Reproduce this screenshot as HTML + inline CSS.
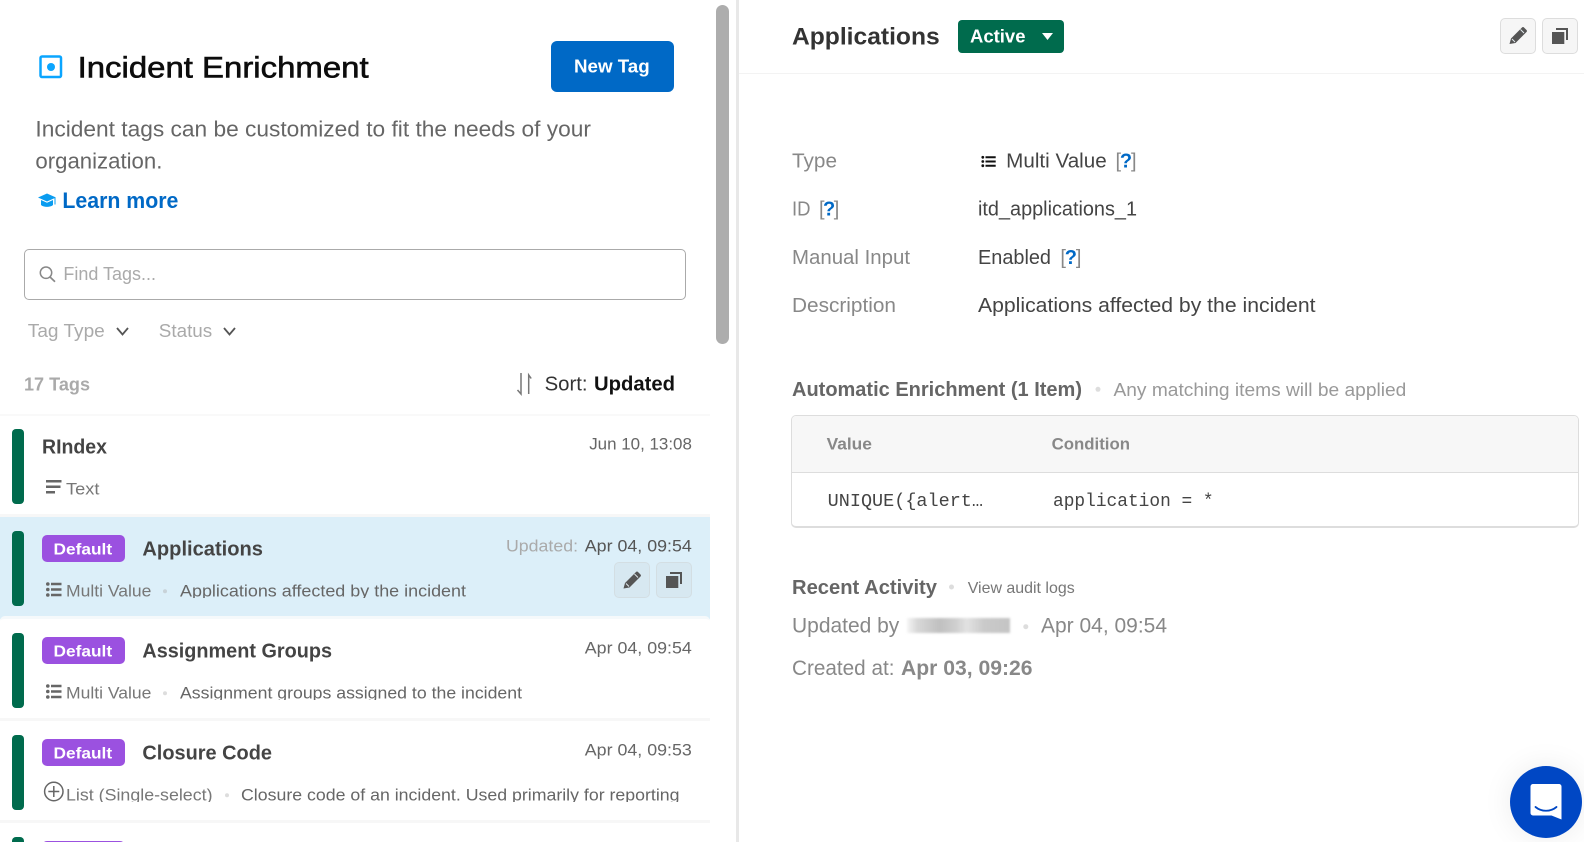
<!DOCTYPE html>
<html lang="en"><head><meta charset="utf-8"><title>Incident Enrichment</title>
<style>
html,body{margin:0;padding:0;width:1584px;height:842px;overflow:hidden;background:#fff}
#p{position:relative;width:1584px;height:842px;overflow:hidden;background:#fff}
.b{position:absolute;box-sizing:border-box}
svg{position:absolute;left:0;top:0}
text{font-family:"Liberation Sans",sans-serif;white-space:pre}
.m{font-family:"Liberation Mono",monospace}
.w{font-weight:700}
</style></head><body><div id="p">
<div class="b" style="left:716px;top:5px;width:13px;height:339px;background:#adadad;border-radius:7px"></div>
<div class="b" style="left:735.500px;top:0;width:3.500px;height:842px;background:#e8e8e8"></div>
<div class="b" style="left:551px;top:41px;width:122.500px;height:51px;background:#0069c6;border-radius:6px"></div>
<div class="b" style="left:24px;top:249px;width:662px;height:51px;border:1px solid #aaa;border-radius:5px"></div>
<div class="b" style="left:0;top:414px;width:710px;height:2px;background:#f9f9f9"></div>
<div class="b" style="left:0;top:514px;width:710px;height:3px;background:#f7f7f7"></div>
<div class="b" style="left:0;top:517px;width:710px;height:102px;background:#dceff9"></div>
<div class="b" style="left:0;top:616px;width:710px;height:5px;background:#fff;border-radius:5px 5px 0 0;border-top:3px solid #f5f9fb"></div>
<div class="b" style="left:0;top:718px;width:710px;height:3px;background:#f7f7f7"></div>
<div class="b" style="left:0;top:820px;width:710px;height:3px;background:#f7f7f7"></div>
<div class="b" style="left:12px;top:429px;width:12px;height:75px;background:#006b4d;border-radius:4px"></div>
<div class="b" style="left:12px;top:531px;width:12px;height:75px;background:#006b4d;border-radius:4px"></div>
<div class="b" style="left:12px;top:633px;width:12px;height:75px;background:#006b4d;border-radius:4px"></div>
<div class="b" style="left:12px;top:735px;width:12px;height:75px;background:#006b4d;border-radius:4px"></div>
<div class="b" style="left:12px;top:837px;width:12px;height:20px;background:#006b4d;border-radius:4px"></div>
<div class="b" style="left:42px;top:535px;width:82.500px;height:27px;background:#9b51e0;border-radius:5px"></div>
<div class="b" style="left:42px;top:637px;width:82.500px;height:27px;background:#9b51e0;border-radius:5px"></div>
<div class="b" style="left:42px;top:739px;width:82.500px;height:27px;background:#9b51e0;border-radius:5px"></div>
<div class="b" style="left:42px;top:841px;width:82.500px;height:27px;background:#9b51e0;border-radius:5px"></div>
<div class="b" style="left:614px;top:562px;width:36px;height:36px;background:#d7e8f1;border:1px solid #d3dee3;border-radius:5px"></div>
<div class="b" style="left:656px;top:562px;width:36px;height:36px;background:#d7e8f1;border:1px solid #d3dee3;border-radius:5px"></div>
<div class="b" style="left:958px;top:20px;width:106px;height:33px;background:#006b4d;border-radius:4px"></div>
<div class="b" style="left:1500px;top:18px;width:36px;height:36px;background:#f6f6f6;border:1px solid #ddd;border-radius:5px"></div>
<div class="b" style="left:1542px;top:18px;width:36px;height:36px;background:#f6f6f6;border:1px solid #ddd;border-radius:5px"></div>
<div class="b" style="left:739px;top:73px;width:845px;height:1px;background:#f3f3f3"></div>
<div class="b" style="left:791px;top:415px;width:788px;height:113px;border:1px solid #ddd;border-bottom:2px solid #ddd;border-radius:5px;overflow:hidden"><div style="height:56px;background:#f7f7f7;border-bottom:1px solid #ddd"></div></div>
<div class="b" style="left:907px;top:618px;width:103px;height:15px;background:linear-gradient(90deg,#f5f5f5 0,#d8d8d8 10%,#c0c0c0 32%,#d0d0d0 48%,#e2e2e2 58%,#cacaca 75%,#c4c4c4 100%);filter:blur(1px)"></div>
<div class="b" style="left:1510px;top:766px;width:72px;height:72px;background:#0047c4;border-radius:50%;box-shadow:0 0 30px rgba(0,0,0,.08)"></div>

<svg width="1584" height="842" viewBox="0 0 1584 842" xmlns="http://www.w3.org/2000/svg">
<defs>
<clipPath id="c2"><rect x="0" y="570" width="600" height="28"/></clipPath>
<clipPath id="c3"><rect x="0" y="672" width="600" height="28"/></clipPath>
<clipPath id="c4"><rect x="0" y="774" width="700" height="28"/></clipPath>
<g id="pencil"><path d="M0 17l1.500-5.500L12.500 .5a1.500 1.500 0 0 1 2 0l2.500 2.500a1.500 1.500 0 0 1 0 2L6 16z" fill="#555"/><path d="M2.500 12l3 3M11 2.500l3.500 3.500" stroke="#e6eef2" stroke-width=".9" fill="none"/></g>
<g id="copy"><path d="M4 0h12v12h-2V2H4z" fill="#555"/><rect x="0" y="4" width="12.300" height="12" fill="#555"/></g>
<g id="ml"><circle cx="47.800" cy="0" r="1.800"/><circle cx="47.800" cy="5.500" r="1.800"/><circle cx="47.800" cy="11" r="1.800"/><path d="M51 -1.200h10.500v2.400H51zM51 4.300h10.500v2.400H51zM51 9.800h10.500v2.400H51z"/></g>
</defs>

<!-- header left -->
<rect x="40.500" y="56.500" width="20.500" height="20.500" rx="1.500" fill="none" stroke="#0aa5ff" stroke-width="2.500"/>
<circle cx="51" cy="67" r="4" fill="#0aa5ff"/>
<text x="77.600" y="77.500" font-size="30" fill="#0c0c0c" stroke="#0c0c0c" stroke-width=".6" textLength="291" lengthAdjust="spacingAndGlyphs">Incident Enrichment</text>
<text x="574" y="72.500" font-size="18" class="w" fill="#fff" textLength="75.700" lengthAdjust="spacingAndGlyphs">New Tag</text>
<text x="35.400" y="136.500" font-size="22" fill="#666" textLength="555.600" lengthAdjust="spacingAndGlyphs">Incident tags can be customized to fit the needs of your</text>
<text x="35.400" y="168.300" font-size="22" fill="#666" textLength="127" lengthAdjust="spacingAndGlyphs">organization.</text>
<path d="M38 197.500l9-4 9 4-9 4z" fill="#0a9cf0"/><path d="M41 200v5c2.500 2.500 9.500 2.500 12 0v-5l-6 2.800z" fill="#0a9cf0"/><path d="M55 198v6.500" stroke="#0a9cf0" stroke-width="1"/>
<text x="62.400" y="208" font-size="22" class="w" fill="#0069c6" textLength="116" lengthAdjust="spacingAndGlyphs">Learn more</text>

<!-- search -->
<circle cx="46" cy="272.700" r="5.700" fill="none" stroke="#888" stroke-width="1.500"/><path d="M50 277l5 4.700" stroke="#888" stroke-width="1.700"/>
<text x="63.400" y="280" font-size="18" fill="#aaa" textLength="92.600" lengthAdjust="spacingAndGlyphs">Find Tags...</text>
<text x="27.800" y="336.800" font-size="18" fill="#aaa" textLength="77" lengthAdjust="spacingAndGlyphs">Tag Type</text>
<path d="M117 328l5.500 6.500 5.500-6.500" fill="none" stroke="#555" stroke-width="1.800"/>
<text x="158.800" y="336.800" font-size="18" fill="#aaa" textLength="53.400" lengthAdjust="spacingAndGlyphs">Status</text>
<path d="M224 328l5.500 6.500 5.500-6.500" fill="none" stroke="#555" stroke-width="1.800"/>

<text x="24" y="390.700" font-size="18" class="w" fill="#aaa" textLength="66" lengthAdjust="spacingAndGlyphs">17 Tags</text>
<path d="M521 373v21l-3.500-4M528.700 394v-19l2.500 3.500" fill="none" stroke="#777" stroke-width="1.500"/>
<text x="544.600" y="390.700" font-size="20" fill="#333" textLength="43" lengthAdjust="spacingAndGlyphs">Sort:</text>
<text x="594" y="390.700" font-size="20" class="w" fill="#111" textLength="81" lengthAdjust="spacingAndGlyphs">Updated</text>

<!-- row 1 -->
<text x="42" y="453.500" font-size="20" class="w" fill="#444" textLength="65" lengthAdjust="spacingAndGlyphs">RIndex</text>
<text x="589.200" y="449.300" font-size="17" fill="#666" textLength="102.700" lengthAdjust="spacingAndGlyphs">Jun 10, 13:08</text>
<path d="M46 480h15.500v2.500H46zM46 485.500h14.500v2.500H46zM46 491h9v2.500h-9z" fill="#666"/>
<text x="66" y="494.500" font-size="17" fill="#777" textLength="33.400" lengthAdjust="spacingAndGlyphs">Text</text>

<!-- row 2 -->
<text x="53.500" y="554.700" font-size="16" class="w" fill="#fff" textLength="58.600" lengthAdjust="spacingAndGlyphs">Default</text>
<text x="142.400" y="555.700" font-size="20" class="w" fill="#444" textLength="120.600" lengthAdjust="spacingAndGlyphs">Applications</text>
<text x="506" y="551.300" font-size="17" fill="#aaa" textLength="72" lengthAdjust="spacingAndGlyphs">Updated:</text>
<text x="584.800" y="551.300" font-size="17" fill="#555" textLength="107" lengthAdjust="spacingAndGlyphs">Apr 04, 09:54</text>
<use href="#ml" y="584" fill="#666"/>
<g clip-path="url(#c2)">
<text x="66" y="596.600" font-size="17" fill="#777" textLength="85.400" lengthAdjust="spacingAndGlyphs">Multi Value</text>
<text x="180" y="596.600" font-size="17" fill="#666" textLength="286" lengthAdjust="spacingAndGlyphs">Applications affected by the incident</text>
</g>
<circle cx="165" cy="591.300" r="2" fill="#c8d2d8"/>
<use href="#pencil" x="623.500" y="571.500"/>
<use href="#copy" x="666" y="572"/>

<!-- row 3 -->
<text x="53.500" y="656.700" font-size="16" class="w" fill="#fff" textLength="58.600" lengthAdjust="spacingAndGlyphs">Default</text>
<text x="142.400" y="657.700" font-size="20" class="w" fill="#444" textLength="189.600" lengthAdjust="spacingAndGlyphs">Assignment Groups</text>
<text x="584.800" y="653.300" font-size="17" fill="#666" textLength="107" lengthAdjust="spacingAndGlyphs">Apr 04, 09:54</text>
<use href="#ml" y="686" fill="#666"/>
<g clip-path="url(#c3)">
<text x="66" y="698.600" font-size="17" fill="#777" textLength="85.400" lengthAdjust="spacingAndGlyphs">Multi Value</text>
<text x="180" y="698.600" font-size="17" fill="#666" textLength="342" lengthAdjust="spacingAndGlyphs">Assignment groups assigned to the incident</text>
</g>
<circle cx="165" cy="693.300" r="2" fill="#ddd"/>

<!-- row 4 -->
<text x="53.500" y="758.700" font-size="16" class="w" fill="#fff" textLength="58.600" lengthAdjust="spacingAndGlyphs">Default</text>
<text x="142.400" y="759.700" font-size="20" class="w" fill="#444" textLength="129.600" lengthAdjust="spacingAndGlyphs">Closure Code</text>
<text x="584.800" y="755.300" font-size="17" fill="#666" textLength="107" lengthAdjust="spacingAndGlyphs">Apr 04, 09:53</text>
<circle cx="53.800" cy="791.500" r="9.200" fill="none" stroke="#666" stroke-width="1.500"/>
<path d="M53.800 786v11M48.300 791.500h11" stroke="#666" stroke-width="1.500"/>
<g clip-path="url(#c4)">
<text x="66" y="800.600" font-size="17" fill="#777" textLength="146.500" lengthAdjust="spacingAndGlyphs">List (Single-select)</text>
<text x="241" y="800.600" font-size="17" fill="#666" textLength="438.500" lengthAdjust="spacingAndGlyphs">Closure code of an incident. Used primarily for reporting</text>
</g>
<circle cx="227" cy="795.300" r="2" fill="#ddd"/>

<!-- right header -->
<text x="792" y="44.300" font-size="24" class="w" fill="#333" textLength="147.700" lengthAdjust="spacingAndGlyphs">Applications</text>
<text x="970" y="42.700" font-size="18" class="w" fill="#fff" textLength="55.500" lengthAdjust="spacingAndGlyphs">Active</text>
<path d="M1042 33h11l-5.500 7z" fill="#fff"/>
<use href="#pencil" x="1509.500" y="27"/>
<use href="#copy" x="1552" y="28"/>

<!-- details -->
<g font-size="20">
<text x="792" y="167.500" fill="#888" textLength="45" lengthAdjust="spacingAndGlyphs">Type</text>
<g fill="#111"><circle cx="982.800" cy="157.300" r="1.400"/><circle cx="982.800" cy="161.500" r="1.400"/><circle cx="982.800" cy="165.700" r="1.400"/><path d="M985.500 156.300h10.200v2h-10.200zM985.500 160.500h10.200v2h-10.200zM985.500 164.700h10.200v2h-10.200z"/></g>
<text x="1006.200" y="167.500" fill="#444" textLength="100.500" lengthAdjust="spacingAndGlyphs">Multi Value</text>
<text x="1115.500" y="167.500" fill="#888" textLength="21" lengthAdjust="spacing">[<tspan class="w" fill="#0069c6">?</tspan>]</text>
<text x="792" y="215.400" fill="#888" textLength="18.500" lengthAdjust="spacingAndGlyphs">ID</text>
<text x="819" y="215.400" fill="#888" textLength="20.300" lengthAdjust="spacing">[<tspan class="w" fill="#0069c6">?</tspan>]</text>
<text x="978" y="215.400" fill="#444" textLength="159" lengthAdjust="spacingAndGlyphs">itd_applications_1</text>
<text x="792" y="263.800" fill="#888" textLength="118" lengthAdjust="spacingAndGlyphs">Manual Input</text>
<text x="978" y="263.800" fill="#444" textLength="73" lengthAdjust="spacingAndGlyphs">Enabled</text>
<text x="1060.400" y="263.800" fill="#888" textLength="21" lengthAdjust="spacing">[<tspan class="w" fill="#0069c6">?</tspan>]</text>
<text x="792" y="311.900" fill="#888" textLength="104" lengthAdjust="spacingAndGlyphs">Description</text>
<text x="978" y="311.900" fill="#444" textLength="337.500" lengthAdjust="spacingAndGlyphs">Applications affected by the incident</text>
</g>

<!-- enrichment -->
<text x="792" y="396" font-size="20" class="w" fill="#666" textLength="290" lengthAdjust="spacingAndGlyphs">Automatic Enrichment (1 Item)</text>
<circle cx="1098" cy="389.300" r="2.500" fill="#ddd"/>
<text x="1113.500" y="396" font-size="18" fill="#999" textLength="292.800" lengthAdjust="spacingAndGlyphs">Any matching items will be applied</text>
<text x="826.600" y="449.300" font-size="17" class="w" fill="#888" textLength="45.300" lengthAdjust="spacingAndGlyphs">Value</text>
<text x="1051.600" y="449.300" font-size="17" class="w" fill="#888" textLength="78.400" lengthAdjust="spacingAndGlyphs">Condition</text>
<text x="827.700" y="505.800" font-size="18" class="m" fill="#444" textLength="155.300" lengthAdjust="spacingAndGlyphs">UNIQUE({alert…</text>
<text x="1053" y="505.800" font-size="18" class="m" fill="#444" textLength="160.600" lengthAdjust="spacingAndGlyphs">application = *</text>

<!-- activity -->
<text x="792" y="594" font-size="20" class="w" fill="#666" textLength="145" lengthAdjust="spacingAndGlyphs">Recent Activity</text>
<circle cx="951.500" cy="587" r="2.500" fill="#ddd"/>
<text x="967.700" y="593" font-size="16" fill="#777" textLength="107" lengthAdjust="spacingAndGlyphs">View audit logs</text>
<text x="792" y="632.700" font-size="21" fill="#888" textLength="107.300" lengthAdjust="spacingAndGlyphs">Updated by</text>
<circle cx="1025.800" cy="626.700" r="2.500" fill="#ddd"/>
<text x="1041" y="632.700" font-size="21" fill="#888" textLength="126" lengthAdjust="spacingAndGlyphs">Apr 04, 09:54</text>
<text x="792" y="675" font-size="21" fill="#888" textLength="102.500" lengthAdjust="spacingAndGlyphs">Created at:</text>
<text x="901" y="675" font-size="21" class="w" fill="#888" textLength="131.500" lengthAdjust="spacingAndGlyphs">Apr 03, 09:26</text>

<!-- chat -->
<path d="M1533 784h26a2.500 2.500 0 0 1 2.500 2.500v33l-10-4h-18.500a2.500 2.500 0 0 1-2.500-2.500v-26.500a2.500 2.500 0 0 1 2.500-2.500z" fill="#fff"/>
<path d="M1535.500 807c6 5 15 5 21 0" fill="none" stroke="#0047c4" stroke-width="1.800" stroke-linecap="round"/>
</svg>
</div></body></html>
